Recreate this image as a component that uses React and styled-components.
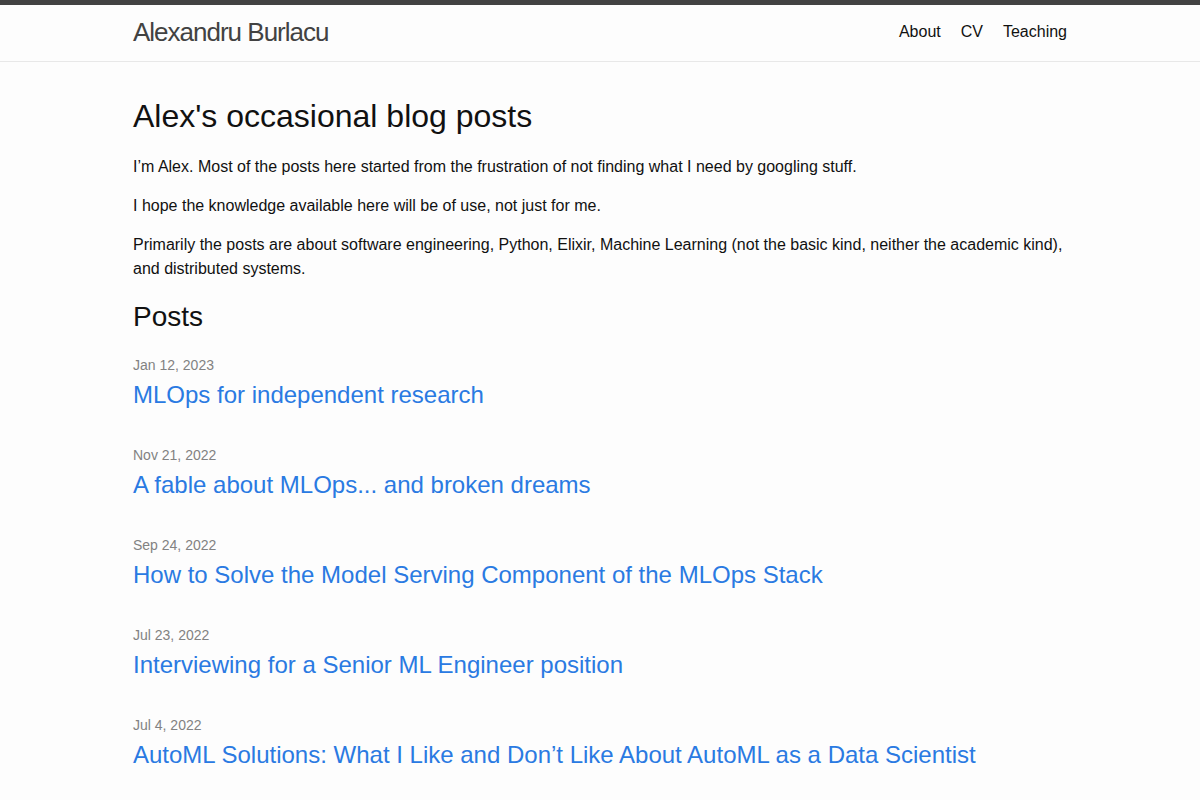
import React from 'react'
import styled, { createGlobalStyle } from 'styled-components';

const posts = [
  { date: 'Jan 12, 2023', title: 'MLOps for independent research' },
  { date: 'Nov 21, 2022', title: 'A fable about MLOps... and broken dreams' },
  { date: 'Sep 24, 2022', title: 'How to Solve the Model Serving Component of the MLOps Stack' },
  { date: 'Jul 23, 2022', title: 'Interviewing for a Senior ML Engineer position' },
  { date: 'Jul 4, 2022', title: 'AutoML Solutions: What I Like and Don\u2019t Like About AutoML as a Data Scientist' },
]

const GlobalStyle = createGlobalStyle`
  * { box-sizing: border-box; }
  body {
    margin: 0;
    font-family: "Liberation Sans", Arial, sans-serif;
    font-size: 16px;
    line-height: 1.5;
    color: #111;
    background: #fdfdfd;
  }
  a { text-decoration: none; }
`;

const Wrapper = styled.div`
  max-width: 934px;
  margin: 0 auto;
`;

const Header = styled.header`
  border-top: 5px solid #424242;
  border-bottom: 1px solid #e8e8e8;
  min-height: 62px;
`;

const HeaderInner = styled(Wrapper)`
  display: flex;
  justify-content: space-between;
  align-items: flex-start;
`;

const SiteTitle = styled.a`
  font-size: 26px;
  font-weight: 300;
  letter-spacing: -1px;
  line-height: 54px;
  color: #424242;
`;

const Nav = styled.nav`
  display: flex;
  gap: 20px;
  line-height: 54px;
  a {
    color: #111;
  }
`;

const Main = styled.main`
  padding: 30px 0;
`;

const PageHeading = styled.h1`
  font-size: 32px;
  font-weight: 400;
  line-height: 1.5;
  margin: 0 0 15px;
`;

const Para = styled.p`
  margin: 0 0 15px;
`;

const ListHeading = styled.h2`
  font-size: 28px;
  font-weight: 400;
  line-height: 1.5;
  margin: 0 0 15px;
`;

const PostList = styled.ul`
  list-style: none;
  margin: 0;
  padding: 0;
`;

const PostItem = styled.li`
  margin-bottom: 30px;
`;

const Meta = styled.div`
  font-size: 14px;
  line-height: 24px;
  color: #828282;
`;

const PostLink = styled.a`
  display: block;
  font-size: 24px;
  line-height: 1.5;
  color: #2a7ae2;
`;

function App() {
  return (
    <>
      <GlobalStyle />
      <Header>
        <HeaderInner>
          <SiteTitle href="#">Alexandru Burlacu</SiteTitle>
          <Nav>
            <a href="#">About</a>
            <a href="#">CV</a>
            <a href="#">Teaching</a>
          </Nav>
        </HeaderInner>
      </Header>
      <Main>
        <Wrapper>
          <PageHeading>Alex's occasional blog posts</PageHeading>
          <Para>I’m Alex. Most of the posts here started from the frustration of not finding what I need by googling stuff.</Para>
          <Para>I hope the knowledge available here will be of use, not just for me.</Para>
          <Para>Primarily the posts are about software engineering, Python, Elixir, Machine Learning (not the basic kind, neither the academic kind), and distributed systems.</Para>
          <ListHeading>Posts</ListHeading>
          <PostList>
            {posts.map(p => (
              <PostItem key={p.title}>
                <Meta>{p.date}</Meta>
                <PostLink href="#">{p.title}</PostLink>
              </PostItem>
            ))}
          </PostList>
        </Wrapper>
      </Main>
    </>
  )
}

export default App
